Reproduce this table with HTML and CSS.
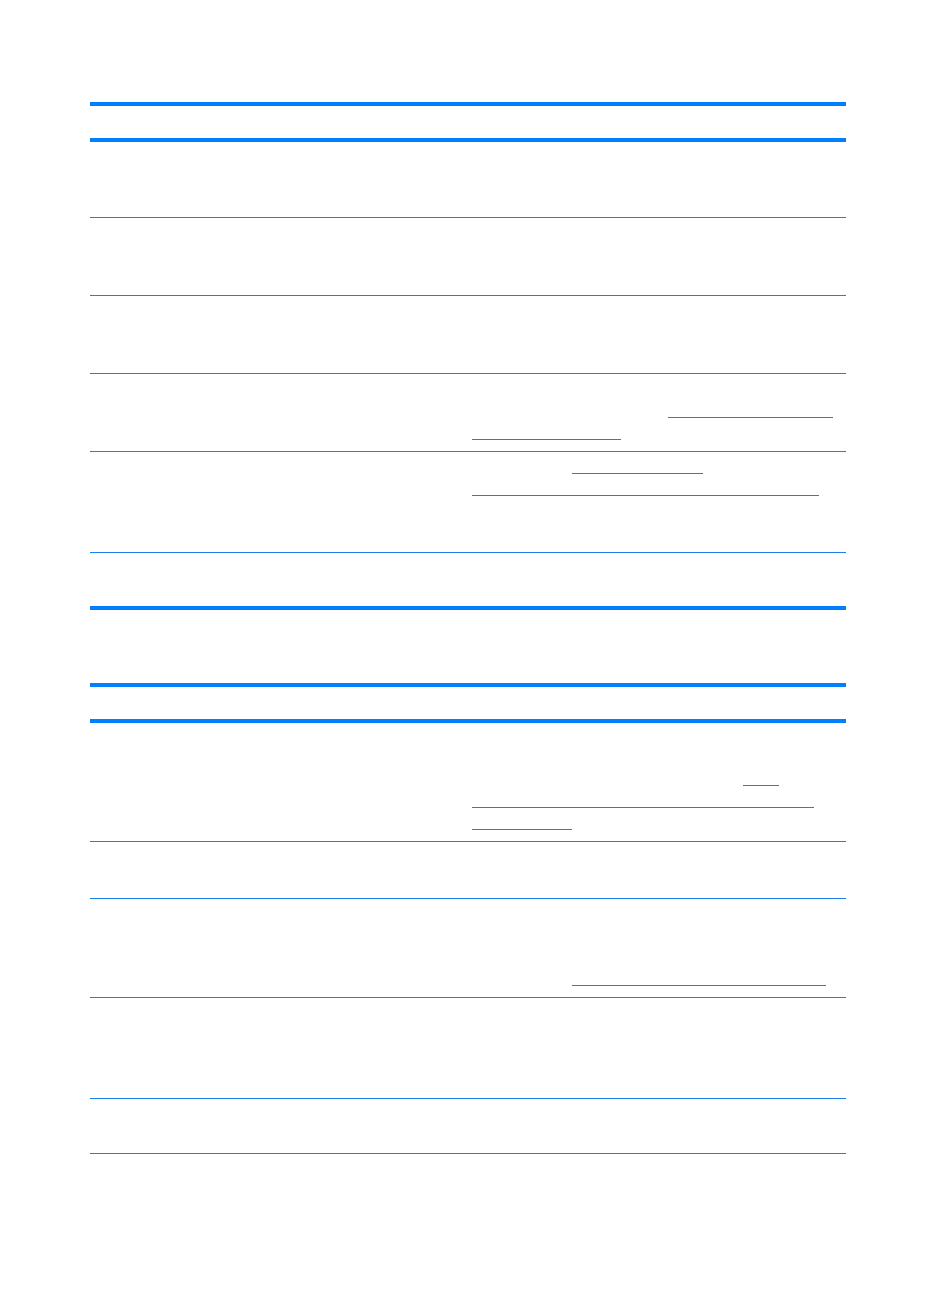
FILE: index.html
```html
<!DOCTYPE html>
<html lang="en">
<head>
<meta charset="utf-8">
<title>Tables</title>
<link rel="stylesheet" href="styles.css">
</head>
<body>
<main class="page">
  <section class="tbl tbl-one">
    <div class="head"></div>
    <div class="row h75"><div class="c1"></div><div class="c2"></div></div>
    <div class="row h77"><div class="c1"></div><div class="c2"></div></div>
    <div class="row h77"><div class="c1"></div><div class="c2"></div></div>
    <div class="row h77 pt5">
      <div class="c1"></div>
      <div class="c2">
        <div class="ln"></div>
        <div class="ln"><a class="lk" style="margin-left:196px;width:165px"></a></div>
        <div class="ln"><a class="lk" style="width:149px"></a></div>
      </div>
    </div>
    <div class="row h100 pt5">
      <div class="c1"></div>
      <div class="c2">
        <div class="ln"><a class="lk" style="margin-left:100px;width:131px"></a></div>
        <div class="ln"><a class="lk" style="width:347px"></a></div>
      </div>
    </div>
    <div class="row h53 last"><div class="c1"></div><div class="c2"></div></div>
  </section>

  <section class="tbl tbl-two">
    <div class="head"></div>
    <div class="row h118 pt2">
      <div class="c1"></div>
      <div class="c2">
        <div class="ln"></div>
        <div class="ln"></div>
        <div class="ln"><a class="lk" style="margin-left:271px;width:36px"></a></div>
        <div class="ln"><a class="lk" style="width:342px"></a></div>
        <div class="ln"><a class="lk" style="width:100px"></a></div>
      </div>
    </div>
    <div class="row h56"><div class="c1"></div><div class="c2"></div></div>
    <div class="row h98 pt4">
      <div class="c1"></div>
      <div class="c2">
        <div class="ln"></div>
        <div class="ln"></div>
        <div class="ln"></div>
        <div class="ln"><a class="lk" style="margin-left:100px;width:254px"></a></div>
      </div>
    </div>
    <div class="row h100"><div class="c1"></div><div class="c2"></div></div>
    <div class="row h54 thin-last"><div class="c1"></div><div class="c2"></div></div>
  </section>
</main>
</body>
</html>
```

FILE: styles.css
```css
html, body {
  margin: 0;
  padding: 0;
  background: #ffffff;
  font-family: "Liberation Sans", Arial, sans-serif;
  font-size: 13px;
  color: #000;
}

.page {
  width: 756px;
  padding: 102px 0 0 90px;
}

.tbl {
  display: flex;
  flex-direction: column;
  border-top: 4px solid #0080ff;
}

.tbl-two {
  margin-top: 73px;
}

.head {
  height: 32px;
  border-bottom: 4px solid #0080ff;
}

.row {
  display: grid;
  grid-template-columns: 382px 1fr;
  border-bottom: 1px solid #1a80e8;
  box-sizing: border-box;
}

.row.last {
  border-bottom: 4px solid #0080ff;
}

.h53 { height: 57px; }
.h54 { height: 55px; }
.h56 { height: 57px; }
.h75 { height: 76px; }
.h77 { height: 78px; }
.h98 { height: 99px; }
.h100 { height: 101px; }
.h118 { height: 119px; }

.pt2 .c2 { padding-top: 2px; }
.pt4 .c2 { padding-top: 4px; }
.pt5 .c2 { padding-top: 5px; }

.ln {
  height: 22px;
  display: flex;
}

.lk {
  display: block;
  height: 16px;
  border-bottom: 1px solid #1a80e8;
}
```
